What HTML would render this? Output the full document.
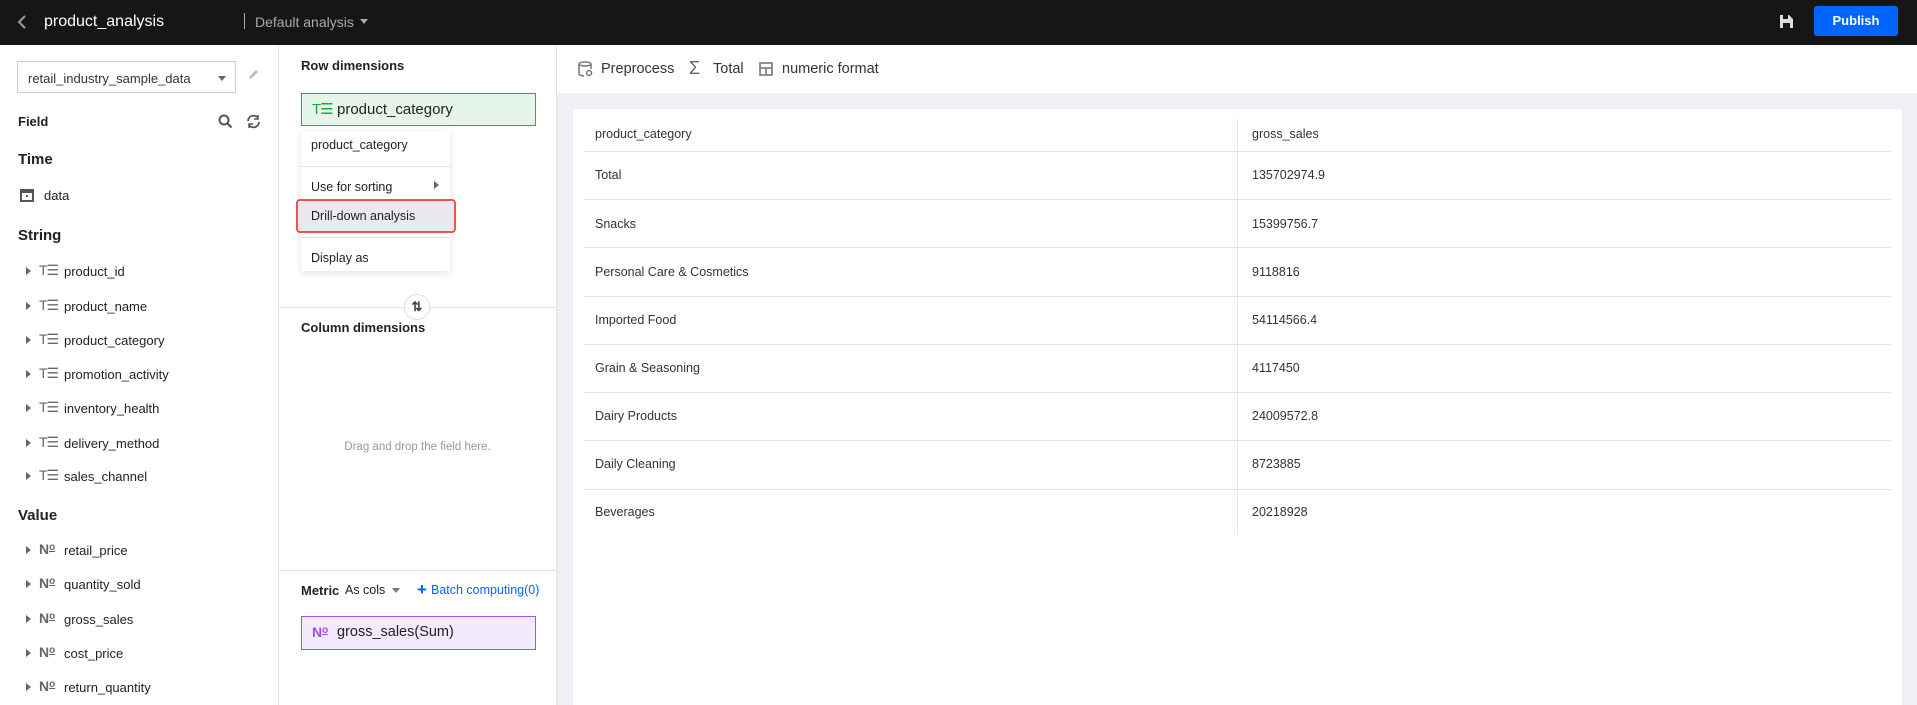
<!DOCTYPE html>
<html><head><meta charset="utf-8"><style>
*{box-sizing:border-box;margin:0;padding:0}
body{width:1917px;height:705px;overflow:hidden;font-family:"Liberation Sans",sans-serif;background:#fff;color:#222;position:relative;font-size:13px}
.a{position:absolute;white-space:nowrap}
.hdr{left:0;top:0;width:1917px;height:45px;background:#161616}
.tri{width:0;height:0;border-left:5px solid #666;border-top:4px solid transparent;border-bottom:4px solid transparent}
.te{font-size:14px;color:#666;letter-spacing:-1px}
.no{font-size:14px;color:#666;font-weight:bold}
.no span{font-size:10px;text-decoration:underline;vertical-align:4px}
.row{position:absolute;left:584px;width:1308px;height:1px;background:#e4e4e4}
.cell{position:absolute;font-size:12.5px;color:#333}
</style></head><body>
<div class="a hdr"></div>
<svg class="a" style="left:16px;top:14px" width="12" height="16"><path d="M9 2L3 8l6 6" stroke="#999" stroke-width="2" fill="none"/></svg>
<div class="a" style="left:44px;top:13px;color:#fff;font-size:16px">product_analysis</div>
<div class="a" style="left:244px;top:13px;width:1px;height:16px;background:#aaa"></div>
<div class="a" style="left:255px;top:14px;color:#aaa;font-size:14px">Default analysis</div>
<div class="a" style="left:360px;top:19px;border-top:5px solid #aaa;border-left:4px solid transparent;border-right:4px solid transparent"></div>
<svg class="a" style="left:1779px;top:14px" width="15" height="15"><path d="M1 1h9l4 4v9H1z" fill="#ddd"/><rect x="4" y="1" width="5" height="4" fill="#161616"/><rect x="4" y="9" width="7" height="5" fill="#161616"/></svg>
<div class="a" style="left:1814px;top:6px;width:84px;height:30px;background:#0066ff;border-radius:3px;color:#fff;font-weight:bold;font-size:13px;text-align:center;line-height:30px">Publish</div>

<div class="a" style="left:278px;top:45px;width:1px;height:660px;background:#e3e3e3"></div>
<div class="a" style="left:17px;top:61px;width:219px;height:32px;border:1px solid #ccd;font-size:13px;padding:9px 10px;color:#333">retail_industry_sample_data</div>
<div class="a" style="left:218px;top:76px;border-top:5px solid #666;border-left:4px solid transparent;border-right:4px solid transparent"></div>
<svg class="a" style="left:247px;top:68px" width="13" height="13"><path d="M2 11l1-3 6-6 2 2-6 6z" fill="#bbb"/></svg>
<div class="a" style="left:18px;top:114px;font-weight:bold;font-size:13px">Field</div>
<svg class="a" style="left:218px;top:114px" width="15" height="15"><circle cx="6" cy="6" r="4.5" stroke="#555" stroke-width="2" fill="none"/><path d="M9.5 9.5l4 4" stroke="#555" stroke-width="2"/></svg>
<svg class="a" style="left:246px;top:114px" width="15" height="15"><path d="M2 7a5.5 5.5 0 0 1 10-3M13 8a5.5 5.5 0 0 1-10 3" stroke="#555" stroke-width="1.8" fill="none"/><path d="M12 1v4h-4M3 14v-4h4" stroke="#555" stroke-width="1.5" fill="none"/></svg>
<div class="a" style="left:18px;top:151px;font-weight:bold;font-size:15px">Time</div>
<svg class="a" style="left:20px;top:188px" width="14" height="14"><rect x="1" y="2" width="12" height="11" fill="none" stroke="#555" stroke-width="2"/><rect x="1" y="2" width="12" height="3" fill="#555"/><rect x="6" y="7" width="2" height="2" fill="#555"/></svg>
<div class="a" style="left:44px;top:188px;font-size:13px">data</div>
<div class="a" style="left:18px;top:227px;font-weight:bold;font-size:15px">String</div>

<div class="a tri" style="left:26px;top:267px"></div><div class="a te" style="left:39px;top:262px">T☰</div><div class="a" style="left:64px;top:264px">product_id</div>
<div class="a tri" style="left:26px;top:302px"></div><div class="a te" style="left:39px;top:297px">T☰</div><div class="a" style="left:64px;top:299px">product_name</div>
<div class="a tri" style="left:26px;top:336px"></div><div class="a te" style="left:39px;top:331px">T☰</div><div class="a" style="left:64px;top:333px">product_category</div>
<div class="a tri" style="left:26px;top:370px"></div><div class="a te" style="left:39px;top:365px">T☰</div><div class="a" style="left:64px;top:367px">promotion_activity</div>
<div class="a tri" style="left:26px;top:404px"></div><div class="a te" style="left:39px;top:399px">T☰</div><div class="a" style="left:64px;top:401px">inventory_health</div>
<div class="a tri" style="left:26px;top:439px"></div><div class="a te" style="left:39px;top:434px">T☰</div><div class="a" style="left:64px;top:436px">delivery_method</div>
<div class="a tri" style="left:26px;top:472px"></div><div class="a te" style="left:39px;top:467px">T☰</div><div class="a" style="left:64px;top:469px">sales_channel</div>

<div class="a" style="left:18px;top:507px;font-weight:bold;font-size:15px">Value</div>
<div class="a tri" style="left:26px;top:546px"></div><div class="a no" style="left:39px;top:541px">N<span>o</span></div><div class="a" style="left:64px;top:543px">retail_price</div>
<div class="a tri" style="left:26px;top:580px"></div><div class="a no" style="left:39px;top:575px">N<span>o</span></div><div class="a" style="left:64px;top:577px">quantity_sold</div>
<div class="a tri" style="left:26px;top:615px"></div><div class="a no" style="left:39px;top:610px">N<span>o</span></div><div class="a" style="left:64px;top:612px">gross_sales</div>
<div class="a tri" style="left:26px;top:649px"></div><div class="a no" style="left:39px;top:644px">N<span>o</span></div><div class="a" style="left:64px;top:646px">cost_price</div>
<div class="a tri" style="left:26px;top:683px"></div><div class="a no" style="left:39px;top:678px">N<span>o</span></div><div class="a" style="left:64px;top:680px">return_quantity</div>

<div class="a" style="left:556px;top:45px;width:1px;height:660px;background:#e3e3e3"></div>
<div class="a" style="left:301px;top:58px;font-weight:bold;font-size:13px">Row dimensions</div>
<div class="a" style="left:301px;top:93px;width:235px;height:33px;border:1px solid #22b34c;background:#e6f5ea"></div>
<div class="a" style="left:312px;top:100px;font-size:15px;color:#1aaa44;letter-spacing:-1px">T☰</div>
<div class="a" style="left:337px;top:101px;font-size:15px">product_category</div>

<div class="a" style="left:301px;top:131px;width:149px;height:140px;background:#fff;box-shadow:0 2px 8px rgba(0,0,0,.12)"></div>
<div class="a" style="left:311px;top:138px;font-size:12.5px">product_category</div>
<div class="a" style="left:301px;top:166px;width:149px;height:1px;background:#e5e5e5"></div>
<div class="a" style="left:311px;top:180px;font-size:12.5px">Use for sorting</div>
<div class="a" style="left:434px;top:181px;border-left:5px solid #666;border-top:4px solid transparent;border-bottom:4px solid transparent"></div>
<div class="a" style="left:296px;top:199px;width:160px;height:34px;border:2px solid #f0524a;border-radius:4px;background:#e8eaef"></div>
<div class="a" style="left:311px;top:209px;font-size:12.5px">Drill-down analysis</div>
<div class="a" style="left:301px;top:237px;width:149px;height:1px;background:#e5e5e5"></div>
<div class="a" style="left:311px;top:251px;font-size:12.5px">Display as</div>

<div class="a" style="left:279px;top:307px;width:277px;height:1px;background:#e3e3e3"></div>
<div class="a" style="left:404px;top:294px;width:26px;height:26px;border:1px solid #ddd;border-radius:50%;background:#fff;text-align:center;line-height:24px;font-weight:bold;font-size:13px;color:#444">⇅</div>
<div class="a" style="left:301px;top:320px;font-weight:bold;font-size:13px">Column dimensions</div>
<div class="a" style="left:279px;top:441px;width:277px;text-align:center;font-size:11.5px;color:#999">Drag and drop the field here.</div>
<div class="a" style="left:279px;top:570px;width:277px;height:1px;background:#e3e3e3"></div>
<div class="a" style="left:301px;top:583px;font-weight:bold;font-size:13px">Metric</div>
<div class="a" style="left:345px;top:583px;font-size:12.5px">As cols</div>
<div class="a" style="left:392px;top:588px;border-top:5px solid #777;border-left:4px solid transparent;border-right:4px solid transparent"></div>
<div class="a" style="left:417px;top:580px;font-size:17px;color:#0066ff;font-weight:bold">+</div>
<div class="a" style="left:431px;top:583px;font-size:12.5px;color:#0066ff">Batch computing(0)</div>
<div class="a" style="left:301px;top:616px;width:235px;height:34px;border:1px solid #a252f0;background:#f3eafd"></div>
<div class="a no" style="left:312px;top:624px;color:#9b4de8">N<span>o</span></div>
<div class="a" style="left:337px;top:624px;font-size:14.5px">gross_sales(Sum)</div>

<div class="a" style="left:557px;top:93px;width:1360px;height:612px;background:#eff0f4"></div>
<svg class="a" style="left:578px;top:61px" width="15" height="16"><ellipse cx="7" cy="3" rx="6" ry="2" fill="none" stroke="#777" stroke-width="1.5"/><path d="M1 3v10c0 1 3 2 5 2M13 3v5" stroke="#777" stroke-width="1.5" fill="none"/><circle cx="11" cy="12" r="2.5" fill="none" stroke="#777" stroke-width="1.5"/></svg>
<div class="a" style="left:601px;top:61px;font-size:14.5px;color:#333">Preprocess</div>
<div class="a" style="left:689px;top:58px;font-size:18px;color:#666">Σ</div>
<div class="a" style="left:713px;top:61px;font-size:14.5px;color:#333">Total</div>
<svg class="a" style="left:759px;top:62px" width="14" height="14"><rect x="1" y="1" width="12" height="12" fill="none" stroke="#777" stroke-width="1.6"/><path d="M1 6h12M7 6v7" stroke="#777" stroke-width="1.6"/></svg>
<div class="a" style="left:782px;top:61px;font-size:14.5px;color:#333">numeric format</div>

<div class="a" style="left:573px;top:109px;width:1329px;height:596px;background:#fff"></div>
<div class="a" style="left:1237px;top:119px;width:1px;height:416px;background:#e4e4e4"></div>
<div class="row" style="top:151px"></div>
<div class="row" style="top:199px"></div>
<div class="row" style="top:247px"></div>
<div class="row" style="top:296px"></div>
<div class="row" style="top:344px"></div>
<div class="row" style="top:392px"></div>
<div class="row" style="top:440px"></div>
<div class="row" style="top:489px"></div>
<div class="cell" style="left:595px;top:127px">product_category</div><div class="cell" style="left:1252px;top:127px">gross_sales</div>
<div class="cell" style="left:595px;top:168px">Total</div><div class="cell" style="left:1252px;top:168px">135702974.9</div>
<div class="cell" style="left:595px;top:217px">Snacks</div><div class="cell" style="left:1252px;top:217px">15399756.7</div>
<div class="cell" style="left:595px;top:265px">Personal Care &amp; Cosmetics</div><div class="cell" style="left:1252px;top:265px">9118816</div>
<div class="cell" style="left:595px;top:313px">Imported Food</div><div class="cell" style="left:1252px;top:313px">54114566.4</div>
<div class="cell" style="left:595px;top:361px">Grain &amp; Seasoning</div><div class="cell" style="left:1252px;top:361px">4117450</div>
<div class="cell" style="left:595px;top:409px">Dairy Products</div><div class="cell" style="left:1252px;top:409px">24009572.8</div>
<div class="cell" style="left:595px;top:457px">Daily Cleaning</div><div class="cell" style="left:1252px;top:457px">8723885</div>
<div class="cell" style="left:595px;top:505px">Beverages</div><div class="cell" style="left:1252px;top:505px">20218928</div>
</body></html>
